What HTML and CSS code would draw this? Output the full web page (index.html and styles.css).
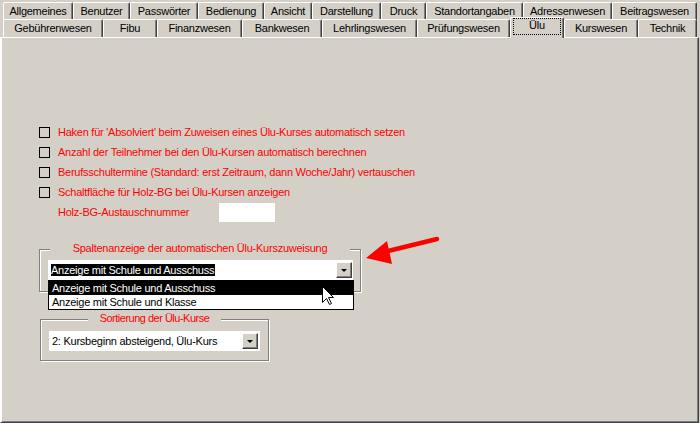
FILE: index.html
```html
<!DOCTYPE html>
<html lang="de">
  <head>
    <meta charset="UTF-8" />
    <title>Einstellungen - Ülu</title>
    <link rel="stylesheet" href="styles.css">
  </head>
  <body>
    <div class="tabs">
      <div class="tab-row back">
        <div class="tab">Allgemeines</div>
        <div class="tab">Benutzer</div>
        <div class="tab">Passwörter</div>
        <div class="tab">Bedienung</div>
        <div class="tab">Ansicht</div>
        <div class="tab">Darstellung</div>
        <div class="tab">Druck</div>
        <div class="tab">Standortangaben</div>
        <div class="tab">Adressenwesen</div>
        <div class="tab">Beitragswesen</div>
      </div>
      <div class="tab-row front">
        <div class="tab">Gebührenwesen</div>
        <div class="tab">Fibu</div>
        <div class="tab">Finanzwesen</div>
        <div class="tab">Bankwesen</div>
        <div class="tab">Lehrlingswesen</div>
        <div class="tab">Prüfungswesen</div>
        <div class="tab active">Ülu</div>
        <div class="tab">Kurswesen</div>
        <div class="tab">Technik</div>
      </div>
    </div>

    <div class="page">
      <div class="options">
        <div class="check"><span class="box"></span>Haken für 'Absolviert' beim Zuweisen eines Ülu-Kurses automatisch setzen</div>
        <div class="check"><span class="box"></span>Anzahl der Teilnehmer bei den Ülu-Kursen automatisch berechnen</div>
        <div class="check"><span class="box"></span>Berufsschultermine (Standard: erst Zeitraum, dann Woche/Jahr) vertauschen</div>
        <div class="check"><span class="box"></span>Schaltfläche für Holz-BG bei Ülu-Kursen anzeigen</div>
        <div class="field">
          <span class="field-label">Holz-BG-Austauschnummer</span>
          <span class="input"></span>
        </div>
      </div>

      <div class="group group-columns">
        <div class="group-title"><span>Spaltenanzeige der automatischen Ülu-Kurszuweisung</span></div>
        <div class="combo">
          <span class="combo-text"><span class="selected">Anzeige mit Schule und Ausschuss</span></span>
          <span class="combo-btn"><span class="caret"></span></span>
        </div>
        <ul class="dropdown">
          <li class="hover">Anzeige mit Schule und Ausschuss</li>
          <li>Anzeige mit Schule und Klasse</li>
        </ul>
      </div>

      <div class="group group-sort">
        <div class="group-title"><span>Sortierung der Ülu-Kurse</span></div>
        <div class="combo">
          <span class="combo-text">2: Kursbeginn absteigend, Ülu-Kurs</span>
          <span class="combo-btn"><span class="caret"></span></span>
        </div>
      </div>

      <!-- Hinweispfeil -->
      <svg class="arrow" width="80" height="32" viewBox="0 0 80 32">
        <line x1="73" y1="3" x2="20" y2="16" stroke="#ff0000" stroke-width="4.5" stroke-linecap="round" />
        <polygon points="2,22 23,5 28,28" fill="#ff0000" />
      </svg>

      <svg class="cursor" width="13" height="20" viewBox="0 0 13 20">
        <polygon points="0.5,0.5 0.5,16.5 4.5,12.5 7.5,18.5 9.5,17.5 6.5,11.5 11.5,11.5" fill="#fff" stroke="#000" stroke-width="1" />
      </svg>
    </div>
  </body>
</html>
```

FILE: styles.css
```css
html,
body {
  margin: 0;
  padding: 0;
  width: 700px;
  height: 423px;
  overflow: hidden;
  background: #d4d0c8;
  font-family: "Liberation Sans", Arial, sans-serif;
  font-size: 11px;
  letter-spacing: -0.25px;
  color: #000;
}

/* Registerkarten */
.tabs {
  padding: 2px 3px 0 3px;
}

.tab-row {
  display: flex;
}

.tab-row.back {
  height: 17px;
}

.tab-row.front {
  height: 18px;
}

.tab {
  box-sizing: border-box;
  height: 18px;
  flex: none;
  border-left: 1px solid #fff;
  border-top: 1px solid #fff;
  border-right: 1px solid #404040;
  border-radius: 2px 2px 0 0;
  box-shadow: inset -1px 0 0 #808080;
  background: #d4d0c8;
  text-align: center;
  line-height: 16px;
  white-space: nowrap;
}

.back .tab:nth-child(1) { width: 70px; }
.back .tab:nth-child(2) { width: 57px; }
.back .tab:nth-child(3) { width: 68px; }
.back .tab:nth-child(4) { width: 66px; }
.back .tab:nth-child(5) { width: 48px; }
.back .tab:nth-child(6) { width: 69px; }
.back .tab:nth-child(7) { width: 45px; }
.back .tab:nth-child(8) { width: 97px; }
.back .tab:nth-child(9) { width: 89px; }
.back .tab:nth-child(10) { width: 85px; }

.front .tab:nth-child(1) { width: 100px; }
.front .tab:nth-child(2) { width: 54px; }
.front .tab:nth-child(3) { width: 85px; }
.front .tab:nth-child(4) { width: 80px; }
.front .tab:nth-child(5) { width: 95px; }
.front .tab:nth-child(6) { width: 93px; }
.front .tab:nth-child(7) { width: 54px; }
.front .tab:nth-child(8) { width: 74px; }
.front .tab:nth-child(9) { width: 59px; }

.tab.active {
  position: relative;
  z-index: 2;
  height: 21px;
  margin-top: -2px;
  line-height: 15px;
}

.tab.active::before {
  content: "";
  position: absolute;
  left: 2px;
  right: 2px;
  top: 0;
  bottom: 3px;
  border: 1px dotted #000;
}

/* Seite */
.page {
  position: relative;
  box-sizing: border-box;
  width: 699px;
  height: 386px;
  border-left: 1px solid #fff;
  border-top: 1px solid #fff;
  border-right: 1px solid #404040;
  border-bottom: 1px solid #404040;
  box-shadow: inset 1px 0 0 #fff, inset -1px -1px 0 #808080;
  padding-left: 1px;
}

.options {
  padding-top: 84px;
  margin-left: 37px;
}

.check,
.field {
  display: flex;
  align-items: center;
  height: 20px;
  color: #ff0000;
}

.box {
  box-sizing: border-box;
  width: 11px;
  height: 11px;
  border: 1px solid #000;
  margin-right: 8px;
}

.field-label {
  width: 161px;
  padding-left: 19px;
}

.input {
  width: 56px;
  height: 19px;
  background: #fff;
}

/* Gruppenrahmen */
.group {
  position: relative;
  box-sizing: border-box;
  border: 1px solid #808080;
  box-shadow: inset 1px 1px 0 #fff, 1px 1px 0 #fff;
}

.group-title {
  position: absolute;
  left: 0;
  right: 0;
  top: -8px;
  text-align: center;
  line-height: 13px;
  color: #ff0000;
}

.group-title span {
  background: #d4d0c8;
}

.group-columns {
  width: 322px;
  height: 43px;
  margin: 27px 0 0 37px;
  padding: 10px 0 0 8px;
}

.group-columns .group-title span {
  padding: 0 23px;
}

.group-sort {
  width: 229px;
  height: 42px;
  margin: 27px 0 0 38px;
  padding: 11px 0 0 8px;
}

.group-sort .group-title span {
  padding: 0 12px;
  letter-spacing: -0.5px;
}

.combo {
  box-sizing: border-box;
  display: flex;
  align-items: center;
  justify-content: space-between;
  height: 20px;
  background: #fff;
  padding: 0 2px 0 3px;
}

.group-columns .combo {
  width: 305px;
  padding-right: 1px;
}

.group-sort .combo {
  width: 211px;
}

.combo-text {
  line-height: 13px;
  white-space: nowrap;
}

.selected {
  background: #000;
  color: #fff;
  padding: 0 1px 0 0;
}

.combo-btn {
  box-sizing: border-box;
  width: 16px;
  height: 16px;
  display: flex;
  align-items: center;
  justify-content: center;
  background: #d4d0c8;
  border-top: 1px solid #fff;
  border-left: 1px solid #fff;
  border-right: 1px solid #404040;
  border-bottom: 1px solid #404040;
  box-shadow: inset -1px -1px 0 #808080;
}

.caret {
  width: 0;
  height: 0;
  margin: 1px 1px 0 0;
  border-left: 3px solid transparent;
  border-right: 3px solid transparent;
  border-top: 3px solid #000;
}

.dropdown {
  position: absolute;
  left: 8px;
  top: 30px;
  z-index: 3;
  box-sizing: border-box;
  width: 306px;
  margin: 0;
  padding: 0;
  list-style: none;
  background: #fff;
  border: 1px solid #000;
}

.dropdown li {
  height: 14px;
  line-height: 14px;
  padding-left: 3px;
  white-space: nowrap;
}

.dropdown li.hover {
  background: #000;
  color: #fff;
}

.arrow {
  position: absolute;
  left: 363px;
  top: 198px;
}

.cursor {
  position: absolute;
  left: 321px;
  top: 248px;
  z-index: 4;
}
```
